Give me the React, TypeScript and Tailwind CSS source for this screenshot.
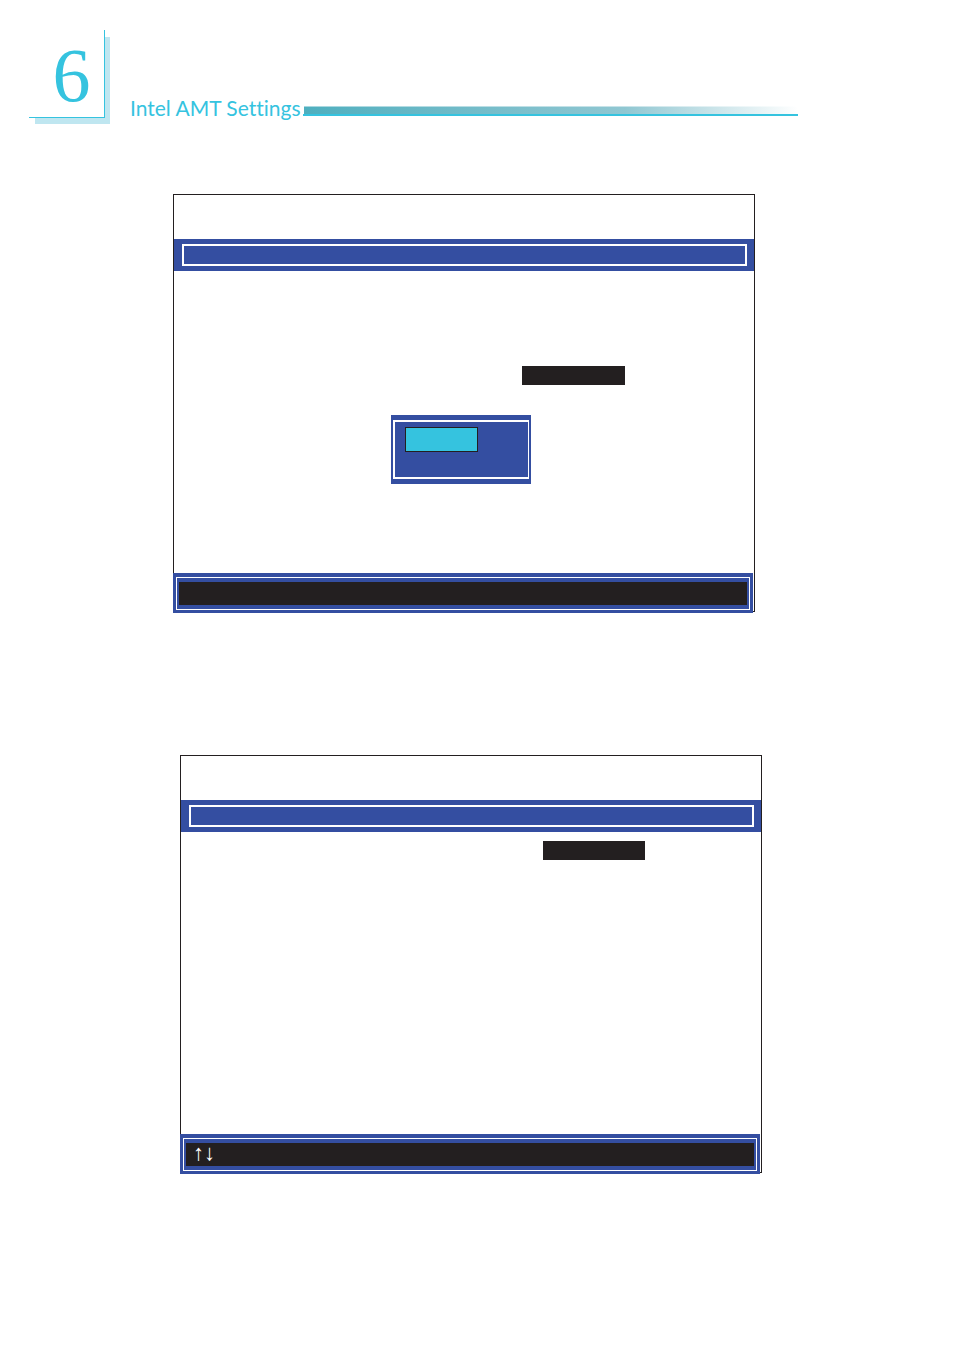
import type { ReactNode } from 'react'

function ChapterHeader({ number, title }: { number: string; title: string }) {
  return (
    <header className="flex items-end gap-5 pt-[30px] pl-[29px] pr-[156px]">
      <div className="relative shrink-0 pr-[5px] pb-[6px]">
        <div className="absolute top-[7px] right-0 bottom-0 left-[6px] bg-[#bfe6f0]" />
        <div className="relative flex h-[88px] w-[76px] items-center justify-center border-r border-b border-[#35c3df] bg-white pt-[2px] pl-[10px] font-['Liberation_Serif',serif] text-[76px] leading-none text-[#35c3df]">
          {number}
        </div>
      </div>
      <div className="flex flex-1 items-end gap-[2px] pb-2">
        <h1 className="shrink-0 font-['Lato',sans-serif] text-[21px] leading-4 font-normal whitespace-nowrap text-[#35c3df] [font-variant-ligatures:none]">
          {title}
        </h1>
        <div className="flex-1 border-b-2 border-[#35c3df]">
          <div className="ml-px h-2 border-t border-white/50 bg-linear-to-r from-[#4eafbf] via-[#90c7d2] via-65% to-white bg-origin-border" />
        </div>
      </div>
    </header>
  )
}

function Screen({ className, keys, children }: { className: string; keys?: string; children: ReactNode }) {
  return (
    <section className={`border border-[#231f20] bg-white ${className}`}>
      <div className="mt-11 bg-[#344ea1] py-[5px] pr-[7px] pl-2">
        <div className="h-[22px] border-2 border-white" />
      </div>
      <div className="h-[302px]">{children}</div>
      <footer className="-mb-[2px] -ml-px mr-px bg-[#344ea1] px-[3px] pt-1 pb-[3px]">
        <div className="border border-white px-[2px] py-1">
          <div className="flex h-[23px] items-start bg-[#231f20] px-[7px] font-['Liberation_Serif',serif] text-[22px] leading-5 text-white">
            {keys}
          </div>
        </div>
      </footer>
    </section>
  )
}

export default function App() {
  return (
    <div className="min-h-screen bg-white pb-44">
      <ChapterHeader number="6" title="Intel AMT Settings" />
      <main>
        <Screen className="mt-[70px] mr-[199px] ml-[173px]">
          <div className="pt-[95px]">
            <div className="ml-[348px] h-[19px] w-[103px] bg-[#231f20]" />
            <div className="mt-[30px] ml-[217px] w-[140px] bg-[#344ea1] px-[2px] py-[5px]">
              <div className="h-[59px] border-2 border-r border-white px-[10px] py-[5px]">
                <div className="h-[25px] w-[73px] border border-[#231f20] bg-[#35c3df]" />
              </div>
            </div>
          </div>
        </Screen>

        <Screen className="mt-[143px] mr-[192px] ml-[180px]" keys="↑↓">
          <div className="pt-[9px]">
            <div className="ml-[362px] h-[19px] w-[102px] bg-[#231f20]" />
          </div>
        </Screen>
      </main>
    </div>
  )
}
